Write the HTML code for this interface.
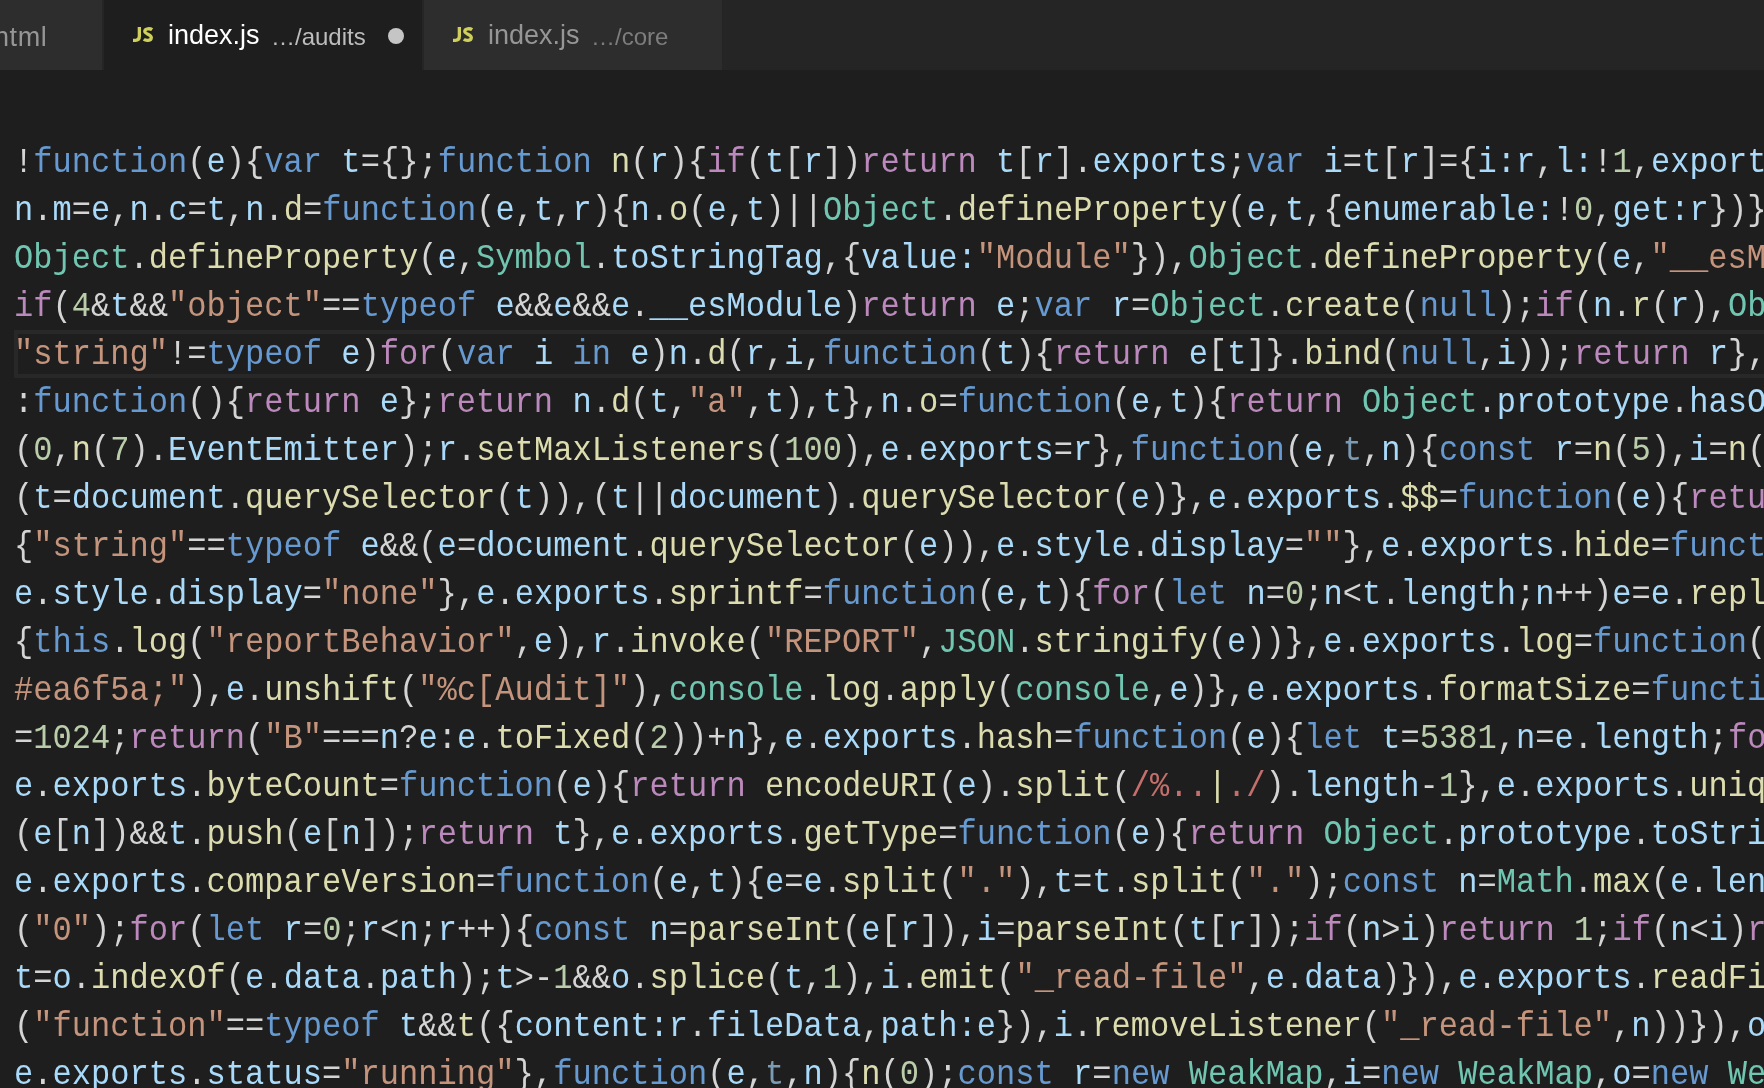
<!DOCTYPE html>
<html><head><meta charset="utf-8">
<style>
html,body{margin:0;padding:0;}
body{width:1764px;height:1088px;overflow:hidden;background:#1e1e1e;position:relative;}
.tabs{position:absolute;left:0;top:0;width:1764px;height:70px;background:#252526;will-change:transform;}
.tab{position:absolute;top:0;height:70px;background:#2d2d2d;box-sizing:border-box;border-right:2px solid #252526;font-family:"Liberation Sans",sans-serif;white-space:nowrap;overflow:hidden;}
.tab.active{background:#1e1e1e;}
.tab span{position:absolute;}
.js{font-family:"Liberation Sans",sans-serif;font-weight:bold;color:#cbcb41;font-size:22px;letter-spacing:-0.5px;transform:scaleX(0.8);transform-origin:0 0;}
.name{font-size:27px;color:#fff;}
.desc{font-size:24px;color:#bdbdbd;}
.tab.inact .name{color:#969696;}
.tab.inact .desc{color:#7d7d7d;}
.jsi{position:absolute;left:28px;top:26px;}
.dot{position:absolute;width:16px;height:16px;border-radius:50%;background:#c5c5c5;}
.editor{position:absolute;left:0;top:70px;width:1764px;height:1018px;overflow:hidden;}
.hl{position:absolute;left:14px;top:260px;width:1800px;height:40px;border:4px solid #282828;}
.code{position:absolute;left:14px;top:70px;font-family:"Liberation Mono",monospace;font-size:32.08px;line-height:48px;color:#d4d4d4;}
.ln{height:48px;white-space:pre;will-change:transform;transform:scaleY(1.07);transform-origin:0 32px;}
i{font-style:normal;}
.k{color:#679ad1}.c{color:#bc89bd}.v{color:#aadafa}.f{color:#dcdcaf}.s{color:#c5947c}.n{color:#bacdab}.t{color:#71c6b1}.r{color:#c46f6c}.u{color:#7b9cb2}
</style></head><body>
<div class="tabs">
  <div class="tab inact" style="left:0;width:104px;"><span class="name" style="left:-6px;top:22px;letter-spacing:0.6px;">html</span></div>
  <div class="tab active" style="left:104px;width:320px;">
    <svg class="jsi" width="22" height="17" viewBox="-1 -1 22 17"><path d="M6.35,0 V9.3 Q6.35,13.35 2.6,13.35 H0" fill="none" stroke="#cfcf5c" stroke-width="3.3"/><path d="M19.2,2.7 C17.3,1.4 11.9,1.0 11.8,4.4 C11.7,7.2 18.3,7.2 18.3,10.4 C18.3,14.1 12.8,13.9 10.8,12.3" fill="none" stroke="#cfcf5c" stroke-width="3.3"/></svg>
    <span class="name" style="left:64px;top:20px;">index.js</span>
    <span class="desc" style="left:167px;top:23px;">&hellip;/audits</span>
    <div class="dot" style="left:284px;top:28px;"></div>
  </div>
  <div class="tab inact" style="left:424px;width:300px;">
    <svg class="jsi" width="22" height="17" viewBox="-1 -1 22 17"><path d="M6.35,0 V9.3 Q6.35,13.35 2.6,13.35 H0" fill="none" stroke="#cfcf5c" stroke-width="3.3"/><path d="M19.2,2.7 C17.3,1.4 11.9,1.0 11.8,4.4 C11.7,7.2 18.3,7.2 18.3,10.4 C18.3,14.1 12.8,13.9 10.8,12.3" fill="none" stroke="#cfcf5c" stroke-width="3.3"/></svg>
    <span class="name" style="left:64px;top:20px;">index.js</span>
    <span class="desc" style="left:167px;top:23px;">&hellip;/core</span>
  </div>
</div>
<div class="editor">
<div class="hl"></div>
<div class="code">
<div class="ln">!<i class="k">function</i>(<i class="v">e</i>){<i class="k">var</i> <i class="v">t</i>={};<i class="k">function</i> <i class="f">n</i>(<i class="v">r</i>){<i class="c">if</i>(<i class="v">t</i>[<i class="v">r</i>])<i class="c">return</i> <i class="v">t</i>[<i class="v">r</i>].<i class="v">exports</i>;<i class="k">var</i> <i class="v">i</i>=<i class="v">t</i>[<i class="v">r</i>]={<i class="v">i:</i><i class="v">r</i>,<i class="v">l:</i>!<i class="n">1</i>,<i class="v">exports:</i>{}</div><div class="ln"><i class="v">n</i>.<i class="v">m</i>=<i class="v">e</i>,<i class="v">n</i>.<i class="v">c</i>=<i class="v">t</i>,<i class="v">n</i>.<i class="f">d</i>=<i class="k">function</i>(<i class="v">e</i>,<i class="v">t</i>,<i class="v">r</i>){<i class="v">n</i>.<i class="f">o</i>(<i class="v">e</i>,<i class="v">t</i>)||<i class="t">Object</i>.<i class="f">defineProperty</i>(<i class="v">e</i>,<i class="v">t</i>,{<i class="v">enumerable:</i>!<i class="n">0</i>,<i class="v">get:</i><i class="v">r</i>})},</div><div class="ln"><i class="t">Object</i>.<i class="f">defineProperty</i>(<i class="v">e</i>,<i class="t">Symbol</i>.<i class="v">toStringTag</i>,{<i class="v">value:</i><i class="s">"Module"</i>}),<i class="t">Object</i>.<i class="f">defineProperty</i>(<i class="v">e</i>,<i class="s">"__esModule"</i></div><div class="ln"><i class="c">if</i>(<i class="n">4</i>&amp;<i class="v">t</i>&amp;&amp;<i class="s">"object"</i>==<i class="k">typeof</i> <i class="v">e</i>&amp;&amp;<i class="v">e</i>&amp;&amp;<i class="v">e</i>.<i class="v">__esModule</i>)<i class="c">return</i> <i class="v">e</i>;<i class="k">var</i> <i class="v">r</i>=<i class="t">Object</i>.<i class="f">create</i>(<i class="k">null</i>);<i class="c">if</i>(<i class="v">n</i>.<i class="f">r</i>(<i class="v">r</i>),<i class="t">Object</i></div><div class="ln"><i class="s">"string"</i>!=<i class="k">typeof</i> <i class="v">e</i>)<i class="c">for</i>(<i class="k">var</i> <i class="v">i</i> <i class="k">in</i> <i class="v">e</i>)<i class="v">n</i>.<i class="f">d</i>(<i class="v">r</i>,<i class="v">i</i>,<i class="k">function</i>(<i class="v">t</i>){<i class="c">return</i> <i class="v">e</i>[<i class="v">t</i>]}.<i class="f">bind</i>(<i class="k">null</i>,<i class="v">i</i>));<i class="c">return</i> <i class="v">r</i>},<i class="v">n</i></div><div class="ln">:<i class="k">function</i>(){<i class="c">return</i> <i class="v">e</i>};<i class="c">return</i> <i class="v">n</i>.<i class="f">d</i>(<i class="v">t</i>,<i class="s">"a"</i>,<i class="v">t</i>),<i class="v">t</i>},<i class="v">n</i>.<i class="f">o</i>=<i class="k">function</i>(<i class="v">e</i>,<i class="v">t</i>){<i class="c">return</i> <i class="t">Object</i>.<i class="v">prototype</i>.<i class="v">hasOwn</i></div><div class="ln">(<i class="n">0</i>,<i class="f">n</i>(<i class="n">7</i>).<i class="v">EventEmitter</i>);<i class="v">r</i>.<i class="f">setMaxListeners</i>(<i class="n">100</i>),<i class="v">e</i>.<i class="v">exports</i>=<i class="v">r</i>},<i class="k">function</i>(<i class="v">e</i>,<i class="u">t</i>,<i class="v">n</i>){<i class="k">const</i> <i class="v">r</i>=<i class="f">n</i>(<i class="n">5</i>),<i class="v">i</i>=<i class="f">n</i>(<i class="n">4</i></div><div class="ln">(<i class="v">t</i>=<i class="v">document</i>.<i class="f">querySelector</i>(<i class="v">t</i>)),(<i class="v">t</i>||<i class="v">document</i>).<i class="f">querySelector</i>(<i class="v">e</i>)},<i class="v">e</i>.<i class="v">exports</i>.<i class="f">$$</i>=<i class="k">function</i>(<i class="v">e</i>){<i class="c">return</i></div><div class="ln">{<i class="s">"string"</i>==<i class="k">typeof</i> <i class="v">e</i>&amp;&amp;(<i class="v">e</i>=<i class="v">document</i>.<i class="f">querySelector</i>(<i class="v">e</i>)),<i class="v">e</i>.<i class="v">style</i>.<i class="v">display</i>=<i class="s">""</i>},<i class="v">e</i>.<i class="v">exports</i>.<i class="f">hide</i>=<i class="k">function</i></div><div class="ln"><i class="v">e</i>.<i class="v">style</i>.<i class="v">display</i>=<i class="s">"none"</i>},<i class="v">e</i>.<i class="v">exports</i>.<i class="f">sprintf</i>=<i class="k">function</i>(<i class="v">e</i>,<i class="v">t</i>){<i class="c">for</i>(<i class="k">let</i> <i class="v">n</i>=<i class="n">0</i>;<i class="v">n</i>&lt;<i class="v">t</i>.<i class="v">length</i>;<i class="v">n</i>++)<i class="v">e</i>=<i class="v">e</i>.<i class="f">replace</i></div><div class="ln">{<i class="k">this</i>.<i class="f">log</i>(<i class="s">"reportBehavior"</i>,<i class="v">e</i>),<i class="v">r</i>.<i class="f">invoke</i>(<i class="s">"REPORT"</i>,<i class="t">JSON</i>.<i class="f">stringify</i>(<i class="v">e</i>))},<i class="v">e</i>.<i class="v">exports</i>.<i class="f">log</i>=<i class="k">function</i>(...</div><div class="ln"><i class="s">#ea6f5a;"</i>),<i class="v">e</i>.<i class="f">unshift</i>(<i class="s">"%c[Audit]"</i>),<i class="t">console</i>.<i class="f">log</i>.<i class="f">apply</i>(<i class="t">console</i>,<i class="v">e</i>)},<i class="v">e</i>.<i class="v">exports</i>.<i class="f">formatSize</i>=<i class="k">function</i></div><div class="ln">=<i class="n">1024</i>;<i class="c">return</i>(<i class="s">"B"</i>===<i class="v">n</i>?<i class="v">e</i>:<i class="v">e</i>.<i class="f">toFixed</i>(<i class="n">2</i>))+<i class="v">n</i>},<i class="v">e</i>.<i class="v">exports</i>.<i class="f">hash</i>=<i class="k">function</i>(<i class="v">e</i>){<i class="k">let</i> <i class="v">t</i>=<i class="n">5381</i>,<i class="v">n</i>=<i class="v">e</i>.<i class="v">length</i>;<i class="c">for</i></div><div class="ln"><i class="v">e</i>.<i class="v">exports</i>.<i class="f">byteCount</i>=<i class="k">function</i>(<i class="v">e</i>){<i class="c">return</i> <i class="f">encodeURI</i>(<i class="v">e</i>).<i class="f">split</i>(<i class="r">/%..</i><i class="f">|</i><i class="r">./</i>).<i class="v">length</i>-<i class="n">1</i>},<i class="v">e</i>.<i class="v">exports</i>.<i class="f">uniqueArr</i></div><div class="ln">(<i class="v">e</i>[<i class="v">n</i>])&amp;&amp;<i class="v">t</i>.<i class="f">push</i>(<i class="v">e</i>[<i class="v">n</i>]);<i class="c">return</i> <i class="v">t</i>},<i class="v">e</i>.<i class="v">exports</i>.<i class="f">getType</i>=<i class="k">function</i>(<i class="v">e</i>){<i class="c">return</i> <i class="t">Object</i>.<i class="v">prototype</i>.<i class="v">toString</i></div><div class="ln"><i class="v">e</i>.<i class="v">exports</i>.<i class="f">compareVersion</i>=<i class="k">function</i>(<i class="v">e</i>,<i class="v">t</i>){<i class="v">e</i>=<i class="v">e</i>.<i class="f">split</i>(<i class="s">"."</i>),<i class="v">t</i>=<i class="v">t</i>.<i class="f">split</i>(<i class="s">"."</i>);<i class="k">const</i> <i class="v">n</i>=<i class="t">Math</i>.<i class="f">max</i>(<i class="v">e</i>.<i class="v">length</i></div><div class="ln">(<i class="s">"0"</i>);<i class="c">for</i>(<i class="k">let</i> <i class="v">r</i>=<i class="n">0</i>;<i class="v">r</i>&lt;<i class="v">n</i>;<i class="v">r</i>++){<i class="k">const</i> <i class="v">n</i>=<i class="f">parseInt</i>(<i class="v">e</i>[<i class="v">r</i>]),<i class="v">i</i>=<i class="f">parseInt</i>(<i class="v">t</i>[<i class="v">r</i>]);<i class="c">if</i>(<i class="v">n</i>&gt;<i class="v">i</i>)<i class="c">return</i> <i class="n">1</i>;<i class="c">if</i>(<i class="v">n</i>&lt;<i class="v">i</i>)<i class="c">return</i></div><div class="ln"><i class="v">t</i>=<i class="v">o</i>.<i class="f">indexOf</i>(<i class="v">e</i>.<i class="v">data</i>.<i class="v">path</i>);<i class="v">t</i>&gt;-<i class="n">1</i>&amp;&amp;<i class="v">o</i>.<i class="f">splice</i>(<i class="v">t</i>,<i class="n">1</i>),<i class="v">i</i>.<i class="f">emit</i>(<i class="s">"_read-file"</i>,<i class="v">e</i>.<i class="v">data</i>)}),<i class="v">e</i>.<i class="v">exports</i>.<i class="f">readFile</i></div><div class="ln">(<i class="s">"function"</i>==<i class="k">typeof</i> <i class="v">t</i>&amp;&amp;<i class="f">t</i>({<i class="v">content:</i><i class="v">r</i>.<i class="v">fileData</i>,<i class="v">path:</i><i class="v">e</i>}),<i class="v">i</i>.<i class="f">removeListener</i>(<i class="s">"_read-file"</i>,<i class="v">n</i>))}),<i class="v">o</i></div><div class="ln"><i class="v">e</i>.<i class="v">exports</i>.<i class="v">status</i>=<i class="s">"running"</i>},<i class="k">function</i>(<i class="v">e</i>,<i class="u">t</i>,<i class="v">n</i>){<i class="f">n</i>(<i class="n">0</i>);<i class="k">const</i> <i class="v">r</i>=<i class="k">new</i> <i class="t">WeakMap</i>,<i class="v">i</i>=<i class="k">new</i> <i class="t">WeakMap</i>,<i class="v">o</i>=<i class="k">new</i> <i class="t">WeakMap</i></div>
</div>
</div>
</body></html>
